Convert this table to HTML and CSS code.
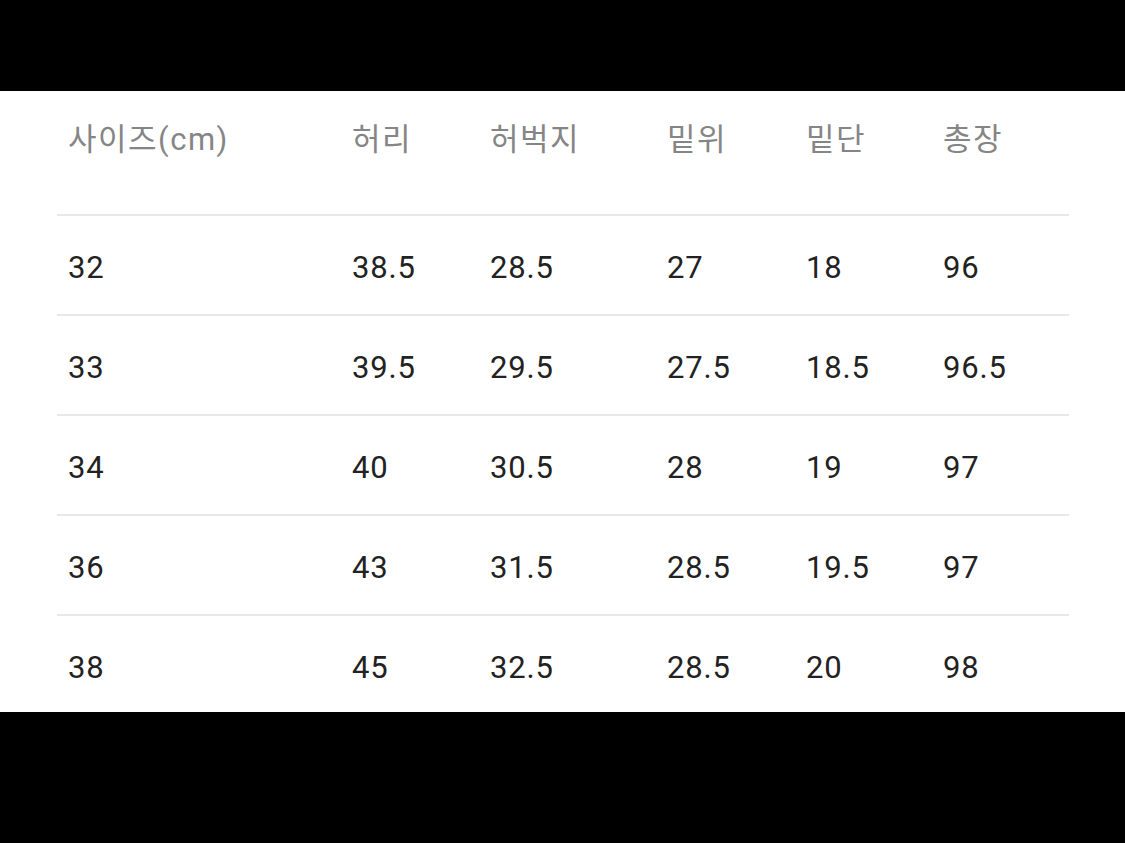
FILE: index.html
```html
<!DOCTYPE html>
<html lang="ko">
<head>
<meta charset="utf-8">
<title>사이즈표</title>
<link rel="stylesheet" href="styles.css">
</head>
<body>
<div class="bar-top"></div>
<main class="panel">
  <div class="row head">
    <div class="cell">사이즈(cm)</div>
    <div class="cell">허리</div>
    <div class="cell">허벅지</div>
    <div class="cell">밑위</div>
    <div class="cell">밑단</div>
    <div class="cell">총장</div>
  </div>
  <div class="row data">
    <div class="cell">32</div><div class="cell">38.5</div><div class="cell">28.5</div><div class="cell">27</div><div class="cell">18</div><div class="cell">96</div>
  </div>
  <div class="row data">
    <div class="cell">33</div><div class="cell">39.5</div><div class="cell">29.5</div><div class="cell">27.5</div><div class="cell">18.5</div><div class="cell">96.5</div>
  </div>
  <div class="row data">
    <div class="cell">34</div><div class="cell">40</div><div class="cell">30.5</div><div class="cell">28</div><div class="cell">19</div><div class="cell">97</div>
  </div>
  <div class="row data">
    <div class="cell">36</div><div class="cell">43</div><div class="cell">31.5</div><div class="cell">28.5</div><div class="cell">19.5</div><div class="cell">97</div>
  </div>
  <div class="row data">
    <div class="cell">38</div><div class="cell">45</div><div class="cell">32.5</div><div class="cell">28.5</div><div class="cell">20</div><div class="cell">98</div>
  </div>
</main>
</body>
</html>
```
FILE: styles.css
```css
html, body {
  margin: 0;
  padding: 0;
  background: #000;
  height: 843px;
  overflow: hidden;
}
body {
  font-family: Roboto, "Noto Sans CJK KR", sans-serif;
}
.bar-top {
  height: 91px;
}
.panel {
  background: #fff;
  height: 621px;
  overflow: hidden;
  padding: 0 56px 0 57px;
}
.row {
  display: grid;
  grid-template-columns: 284px 138px 177px 139px 137px 1fr;
  box-sizing: border-box;
}
.cell {
  padding-left: 11px;
  font-size: 31px;
  line-height: 40px;
  letter-spacing: 0.8px;
  white-space: nowrap;
}
.head {
  height: 123px;
  padding-top: 29px;
  align-items: start;
}
.head .cell {
  color: #858585;
  font-family: Roboto, "Noto Sans CJK KR", sans-serif;
  font-size: 31px;
  font-weight: 400;
  letter-spacing: 1.5px;
}
.data {
  height: 100px;
  border-top: 2px solid #e8e8e8;
  padding-top: 6px;
  align-items: center;
}
.data .cell {
  color: #222;
}
```
